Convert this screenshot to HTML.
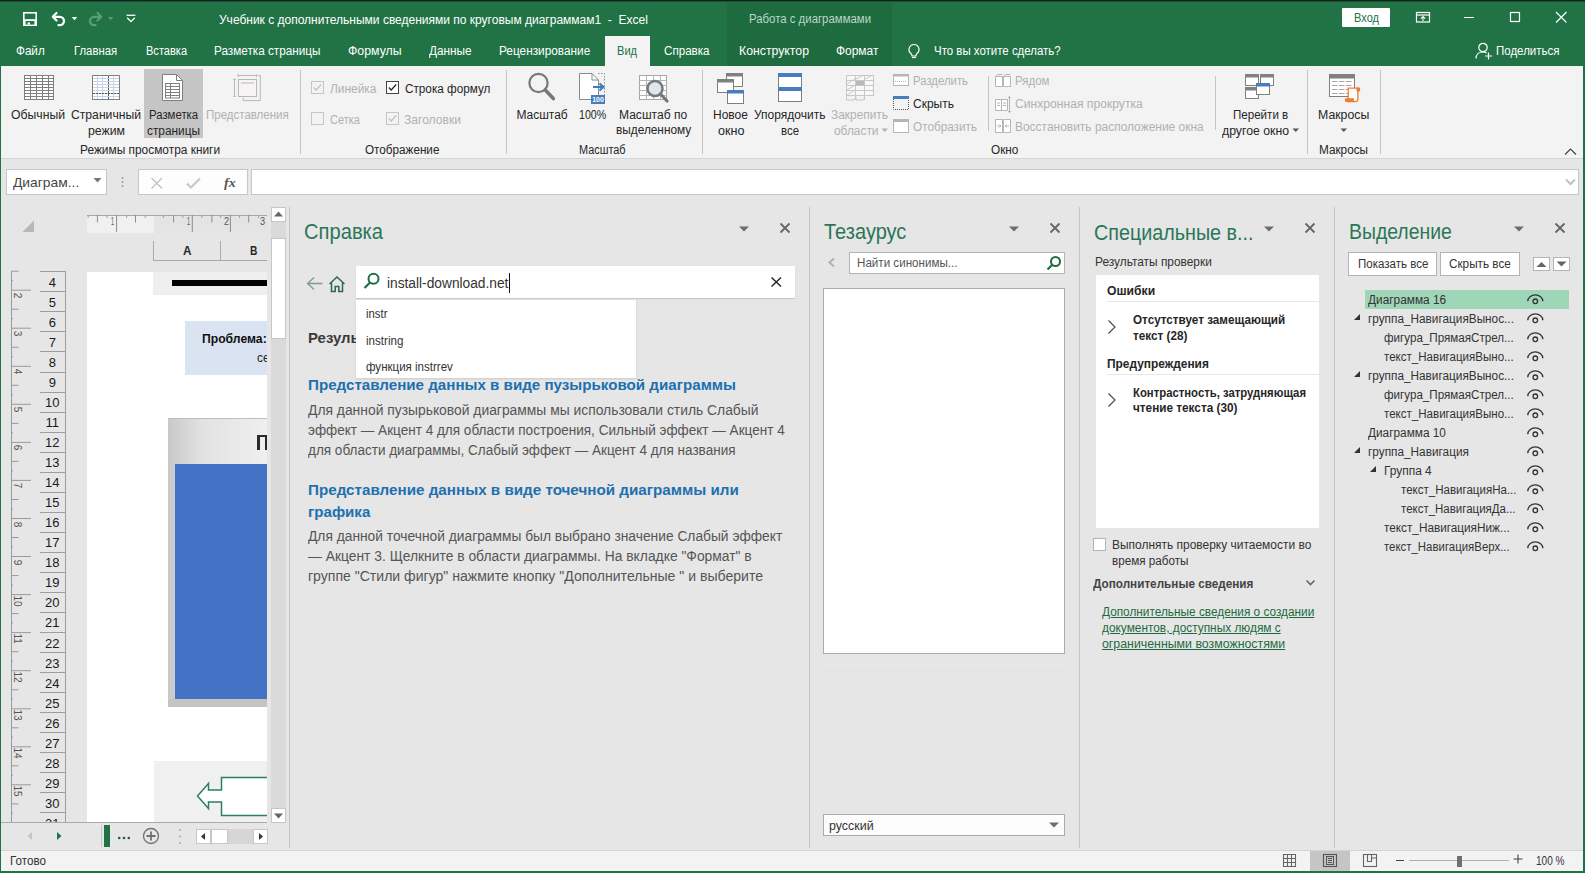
<!DOCTYPE html>
<html><head><meta charset="utf-8"><style>
html,body{margin:0;padding:0;width:1585px;height:873px;overflow:hidden;background:#e6e6e6;}
body{position:relative;font-family:"Liberation Sans",sans-serif;}
.t{position:absolute;white-space:pre;transform-origin:0 0;}
.r{position:absolute;display:block;}
svg{overflow:visible;}
</style></head><body>
<div class="r" style="left:0px;top:0px;width:1585px;height:873px;background:#e6e6e6;"></div>
<div class="r" style="left:0px;top:0px;width:1585px;height:66px;background:#217346;"></div>
<div class="r" style="left:0px;top:0px;width:1585px;height:1px;background:#10231a;"></div>
<div class="r" style="left:0px;top:1px;width:1585px;height:1px;background:#1b4f33;"></div>
<div class="r" style="left:727px;top:3px;width:165px;height:63px;background:#1e6b40;"></div>
<svg class="r" style="left:22px;top:11px;" width="16" height="16" viewBox="0 0 16 16"><rect x="1" y="1" width="14" height="14" fill="#fff"/><rect x="2.6" y="2.6" width="10.8" height="5.6" fill="#217346"/><rect x="3.6" y="10" width="8.8" height="3.6" fill="#217346"/><rect x="5.6" y="11.4" width="2.4" height="2.2" fill="#fff"/></svg>
<svg class="r" style="left:50px;top:10px;" width="30" height="18" viewBox="0 0 30 18"><path d="M6.5 3L2.8 6.8L6.5 10.5" fill="none" stroke="#fff" stroke-width="2.2" stroke-linecap="round" stroke-linejoin="round"/><path d="M3.5 6.8H9.8a4.2 4.2 0 0 1 0 8.4H8.5" fill="none" stroke="#fff" stroke-width="2.2" stroke-linecap="round"/><path d="M21.8 7h5.4l-2.7 3.2z" fill="#fff"/></svg>
<svg class="r" style="left:86px;top:10px;" width="30" height="18" viewBox="0 0 30 18"><path d="M11.5 3L15.2 6.8L11.5 10.5" fill="none" stroke="#5a9e78" stroke-width="2.2" stroke-linecap="round" stroke-linejoin="round"/><path d="M14.5 6.8H8.2a4.2 4.2 0 0 0 0 8.4H9.5" fill="none" stroke="#5a9e78" stroke-width="2.2" stroke-linecap="round"/><path d="M22 7h5.4l-2.7 3.2z" fill="#5a9e78"/></svg>
<svg class="r" style="left:125px;top:12px;" width="12" height="12" viewBox="0 0 12 12"><path d="M1.6 3.3H10.4" stroke="#fff" stroke-width="1.3"/><path d="M2.2 5.8L6 9.6L9.8 5.8" fill="none" stroke="#fff" stroke-width="1.3"/></svg>
<div class="t" style="left:219.00px;top:13.50px;font-size:12px;line-height:12px;color:#ffffff;">Учебник с дополнительными сведениями по круговым диаграммам1  -  Excel</div>
<div class="t" style="left:749.00px;top:12.70px;font-size:12px;line-height:12px;color:#bcd6c6;transform:scaleX(0.9494);">Работа с диаграммами</div>
<div class="r" style="left:1342px;top:8px;width:48px;height:19px;background:#ffffff;border-radius:1px;"></div>
<div class="t" style="left:1354.00px;top:12.00px;font-size:12px;line-height:12px;color:#217346;transform:scaleX(0.9208);">Вход</div>
<svg class="r" style="left:1414px;top:10px;" width="18" height="14" viewBox="0 0 18 14"><rect x="2.5" y="2.5" width="13" height="9.5" fill="none" stroke="#fff" stroke-width="1.2"/><path d="M2.5 5h13" stroke="#fff" stroke-width="1.2"/><path d="M9 11V6.5M6.8 8.7L9 6.5l2.2 2.2" fill="none" stroke="#fff" stroke-width="1.1"/></svg>
<div class="r" style="left:1464px;top:17px;width:10px;height:1px;background:#ffffff;"></div>
<svg class="r" style="left:1508px;top:10px;" width="14" height="14" viewBox="0 0 14 14"><rect x="2.5" y="2.5" width="9" height="9" fill="none" stroke="#fff" stroke-width="1.2"/></svg>
<svg class="r" style="left:1554px;top:10px;" width="14" height="14" viewBox="0 0 14 14"><path d="M2 2l10.5 10.5M12.5 2L2 12.5" stroke="#fff" stroke-width="1.2"/></svg>
<div class="t" style="left:16.00px;top:45.00px;font-size:12px;line-height:12px;color:#ffffff;transform:scaleX(0.9729);">Файл</div>
<div class="t" style="left:74.40px;top:45.00px;font-size:12px;line-height:12px;color:#ffffff;transform:scaleX(0.9453);">Главная</div>
<div class="t" style="left:145.60px;top:45.00px;font-size:12px;line-height:12px;color:#ffffff;transform:scaleX(0.9205);">Вставка</div>
<div class="t" style="left:214.30px;top:45.00px;font-size:12px;line-height:12px;color:#ffffff;transform:scaleX(0.9775);">Разметка страницы</div>
<div class="t" style="left:348.30px;top:45.00px;font-size:12px;line-height:12px;color:#ffffff;transform:scaleX(1.0268);">Формулы</div>
<div class="t" style="left:429.30px;top:45.00px;font-size:12px;line-height:12px;color:#ffffff;transform:scaleX(0.9827);">Данные</div>
<div class="t" style="left:499.00px;top:45.00px;font-size:12px;line-height:12px;color:#ffffff;transform:scaleX(0.9843);">Рецензирование</div>
<div class="t" style="left:664.40px;top:45.00px;font-size:12px;line-height:12px;color:#ffffff;transform:scaleX(0.9682);">Справка</div>
<div class="t" style="left:739.00px;top:45.00px;font-size:12px;line-height:12px;color:#ffffff;transform:scaleX(1.0234);">Конструктор</div>
<div class="t" style="left:836.30px;top:45.00px;font-size:12px;line-height:12px;color:#ffffff;transform:scaleX(0.9941);">Формат</div>
<div class="r" style="left:605px;top:36px;width:45px;height:30px;background:#f3f3f3;"></div>
<div class="t" style="left:617.00px;top:45.00px;font-size:12px;line-height:12px;color:#217346;transform:scaleX(0.9217);">Вид</div>
<svg class="r" style="left:906px;top:42px;" width="16" height="18" viewBox="0 0 16 18"><path d="M8 2.5a5 5 0 0 0-3 9c.8.7 1 1.5 1 2.5h4c0-1 .2-1.8 1-2.5a5 5 0 0 0-3-9z" fill="none" stroke="#fff" stroke-width="1.2"/><path d="M6 15.5h4" stroke="#fff" stroke-width="1.2"/></svg>
<div class="t" style="left:934.20px;top:45.00px;font-size:12px;line-height:12px;color:#ffffff;transform:scaleX(0.9551);">Что вы хотите сделать?</div>
<svg class="r" style="left:1474px;top:41px;" width="20" height="20" viewBox="0 0 20 20"><circle cx="9" cy="6.5" r="4.2" fill="none" stroke="#fff" stroke-width="1.2"/><path d="M2 17.5c0-4 3-6.5 7-6.5 1.5 0 2.7.3 3.7.9" fill="none" stroke="#fff" stroke-width="1.2"/><path d="M14.5 11.5v7M11 15h7" stroke="#fff" stroke-width="1.2"/></svg>
<div class="t" style="left:1495.70px;top:45.00px;font-size:12px;line-height:12px;color:#ffffff;transform:scaleX(0.9585);">Поделиться</div>
<div class="r" style="left:1px;top:66px;width:1582px;height:92px;background:#f3f3f3;"></div>
<div class="r" style="left:1px;top:158px;width:1582px;height:1px;background:#d4d4d4;"></div>
<div class="r" style="left:144px;top:69px;width:59px;height:69px;background:#c5c5c5;"></div>
<div class="r" style="left:300px;top:70px;width:1px;height:84px;background:#c4c4c4;"></div>
<div class="r" style="left:506px;top:70px;width:1px;height:84px;background:#c4c4c4;"></div>
<div class="r" style="left:702px;top:70px;width:1px;height:84px;background:#c4c4c4;"></div>
<div class="r" style="left:1307px;top:70px;width:1px;height:84px;background:#c4c4c4;"></div>
<div class="r" style="left:1380px;top:70px;width:1px;height:84px;background:#c4c4c4;"></div>
<div class="r" style="left:988px;top:76px;width:1px;height:55px;background:#c4c4c4;"></div>
<div class="r" style="left:1215px;top:76px;width:1px;height:54px;background:#c4c4c4;"></div>
<svg class="r" style="left:24px;top:75px;" width="30" height="25" viewBox="0 0 30 25"><rect x="0.5" y="0.5" width="29" height="24" fill="#fff" stroke="#7f7f7f"/><path d="M0 3.5H30" stroke="#7f7f7f" stroke-width="1"/><path d="M0 6.5H30" stroke="#7f7f7f" stroke-width="1"/><path d="M0 9.5H30" stroke="#7f7f7f" stroke-width="1"/><path d="M0 12.5H30" stroke="#7f7f7f" stroke-width="1"/><path d="M0 15.5H30" stroke="#7f7f7f" stroke-width="1"/><path d="M0 18.5H30" stroke="#7f7f7f" stroke-width="1"/><path d="M0 21.5H30" stroke="#7f7f7f" stroke-width="1"/><path d="M6.5 0V25" stroke="#7f7f7f" stroke-width="1"/><path d="M12.5 0V25" stroke="#7f7f7f" stroke-width="1"/><path d="M18.5 0V25" stroke="#7f7f7f" stroke-width="1"/><path d="M24.5 0V25" stroke="#7f7f7f" stroke-width="1"/></svg>
<svg class="r" style="left:92px;top:75px;" width="28" height="25" viewBox="0 0 28 25"><rect x="0.5" y="0.5" width="27" height="24" fill="#fff"/><path d="M0 3.5H28" stroke="#c5d5e8" stroke-width="1"/><path d="M0 6.5H28" stroke="#c5d5e8" stroke-width="1"/><path d="M0 9.5H28" stroke="#c5d5e8" stroke-width="1"/><path d="M0 12.5H28" stroke="#c5d5e8" stroke-width="1"/><path d="M0 15.5H28" stroke="#c5d5e8" stroke-width="1"/><path d="M0 18.5H28" stroke="#c5d5e8" stroke-width="1"/><path d="M0 21.5H28" stroke="#c5d5e8" stroke-width="1"/><path d="M5.5 0V25" stroke="#c5d5e8" stroke-width="1"/><path d="M10.5 0V25" stroke="#c5d5e8" stroke-width="1"/><path d="M21.5 0V25" stroke="#c5d5e8" stroke-width="1"/><path d="M16.5 1V24" stroke="#555" stroke-width="1" stroke-dasharray="2 1"/><path d="M1 18.5H27" stroke="#555" stroke-width="1" stroke-dasharray="2 1"/><rect x="0.5" y="0.5" width="27" height="24" fill="none" stroke="#7f7f7f"/></svg>
<svg class="r" style="left:162px;top:74px;" width="21" height="27" viewBox="0 0 21 27"><path d="M0.5 0.5H14.5L20.5 6.5V26.5H0.5Z" fill="#fff" stroke="#7f7f7f"/><path d="M14.5 0.5V6.5H20.5" fill="none" stroke="#7f7f7f"/><rect x="3.5" y="9.5" width="14" height="14.5" fill="none" stroke="#7f7f7f"/><path d="M3 12.5H18" stroke="#7f7f7f"/><path d="M3 15.5H18" stroke="#7f7f7f"/><path d="M3 18.5H18" stroke="#7f7f7f"/><path d="M3 21.5H18" stroke="#7f7f7f"/><path d="M8.5 9V24" stroke="#7f7f7f"/></svg>
<svg class="r" style="left:233px;top:74px;" width="28" height="27" viewBox="0 0 28 27"><path d="M5 1.5H23.5M5 0V3M23.5 0V3M1.5 5.3V22.3M0 5.3H3M0 22.3H3" fill="none" stroke="#b8b8b8"/><rect x="5.5" y="5.5" width="18" height="17" fill="#f7f4f6" stroke="#b8b8b8"/><path d="M8 9H21" stroke="#d6d6d6" stroke-width="2"/><path d="M25 1.5H27.3V26.6H10.2V24" fill="none" stroke="#b8b8b8"/></svg>
<div class="t" style="left:11.00px;top:109.00px;font-size:12px;line-height:12px;color:#262626;transform:scaleX(1.0179);">Обычный</div>
<div class="t" style="left:71.00px;top:109.00px;font-size:12px;line-height:12px;color:#262626;transform:scaleX(1.0138);">Страничный</div>
<div class="t" style="left:87.50px;top:124.70px;font-size:12px;line-height:12px;color:#262626;transform:scaleX(1.0221);">режим</div>
<div class="t" style="left:148.60px;top:109.00px;font-size:12px;line-height:12px;color:#262626;transform:scaleX(0.9480);">Разметка</div>
<div class="t" style="left:146.70px;top:124.70px;font-size:12px;line-height:12px;color:#262626;transform:scaleX(0.9879);">страницы</div>
<div class="t" style="left:206.00px;top:109.00px;font-size:12px;line-height:12px;color:#b1b1b1;transform:scaleX(0.9577);">Представления</div>
<div class="t" style="left:79.50px;top:143.60px;font-size:12px;line-height:12px;color:#262626;transform:scaleX(0.9915);">Режимы просмотра книги</div>
<svg class="r" style="left:311px;top:81px;" width="13" height="13" viewBox="0 0 13 13"><rect x="0.5" y="0.5" width="12" height="12" fill="#f3f3f3" stroke="#c6c6c6"/><path d="M2.8 6.5L5.2 9L10.2 3.5" fill="none" stroke="#c0c0c0" stroke-width="1.2"/></svg>
<div class="t" style="left:329.50px;top:83.00px;font-size:12px;line-height:12px;color:#b1b1b1;transform:scaleX(0.9936);">Линейка</div>
<svg class="r" style="left:386px;top:81px;" width="13" height="13" viewBox="0 0 13 13"><rect x="0.5" y="0.5" width="12" height="12" fill="#fff" stroke="#444"/><path d="M2.8 6.5L5.2 9L10.2 3.5" fill="none" stroke="#222" stroke-width="1.2"/></svg>
<div class="t" style="left:404.60px;top:83.00px;font-size:12px;line-height:12px;color:#262626;transform:scaleX(0.9771);">Строка формул</div>
<svg class="r" style="left:311px;top:112px;" width="13" height="13" viewBox="0 0 13 13"><rect x="0.5" y="0.5" width="12" height="12" fill="#f3f3f3" stroke="#c6c6c6"/></svg>
<div class="t" style="left:329.60px;top:113.70px;font-size:12px;line-height:12px;color:#b1b1b1;transform:scaleX(0.9158);">Сетка</div>
<svg class="r" style="left:386px;top:112px;" width="13" height="13" viewBox="0 0 13 13"><rect x="0.5" y="0.5" width="12" height="12" fill="#f3f3f3" stroke="#c6c6c6"/><path d="M2.8 6.5L5.2 9L10.2 3.5" fill="none" stroke="#c0c0c0" stroke-width="1.2"/></svg>
<div class="t" style="left:404.00px;top:113.70px;font-size:12px;line-height:12px;color:#b1b1b1;transform:scaleX(1.0071);">Заголовки</div>
<div class="t" style="left:364.60px;top:143.50px;font-size:12px;line-height:12px;color:#262626;transform:scaleX(0.9751);">Отображение</div>
<svg class="r" style="left:526px;top:70px;" width="34" height="34" viewBox="0 0 34 34"><circle cx="12.5" cy="13" r="9.1" fill="none" stroke="#787878" stroke-width="2.2"/><path d="M19.3 20L27.3 28.6" stroke="#787878" stroke-width="3.6" stroke-linecap="round"/></svg>
<svg class="r" style="left:579px;top:73px;" width="27" height="31" viewBox="0 0 27 31"><path d="M0.5 0.5H13L19.5 7V26.5H0.5Z" fill="#fff" stroke="#8a8a8a"/><path d="M13 0.5V7H19.5" fill="none" stroke="#8a8a8a"/><path d="M19 0.5H25.5V22" fill="none" stroke="#8a8a8a" stroke-dasharray="1.5 1.5"/><path d="M14 14H24M20.5 10.5L24.5 14L20.5 17.5" fill="none" stroke="#3d7bbf" stroke-width="2"/><rect x="12" y="22" width="14" height="9" fill="#4a7ebb"/><text x="19" y="29.3" font-family="Liberation Sans" font-size="7" font-weight="bold" fill="#fff" text-anchor="middle">100</text></svg>
<svg class="r" style="left:639px;top:75px;" width="30" height="28" viewBox="0 0 30 28"><rect x="0.5" y="0.5" width="27" height="24" fill="#fff" stroke="#a6a6a6"/><path d="M0 5.5H28" stroke="#b5b5b5"/><path d="M0 10.5H28" stroke="#b5b5b5"/><path d="M0 15.5H28" stroke="#b5b5b5"/><path d="M0 20.5H28" stroke="#b5b5b5"/><path d="M7.5 0V25" stroke="#b5b5b5"/><path d="M14.5 0V25" stroke="#b5b5b5"/><path d="M21.5 0V25" stroke="#b5b5b5"/><circle cx="16" cy="13.5" r="7.5" fill="#dfe6ee" stroke="#787878" stroke-width="2.5"/><path d="M21.5 19L28 26" stroke="#787878" stroke-width="3.2" stroke-linecap="round"/></svg>
<div class="t" style="left:516.40px;top:108.90px;font-size:12px;line-height:12px;color:#262626;">Масштаб</div>
<div class="t" style="left:578.80px;top:108.90px;font-size:12px;line-height:12px;color:#262626;transform:scaleX(0.8860);">100%</div>
<div class="t" style="left:619.20px;top:108.90px;font-size:12px;line-height:12px;color:#262626;transform:scaleX(1.0037);">Масштаб по</div>
<div class="t" style="left:615.80px;top:124.40px;font-size:12px;line-height:12px;color:#262626;transform:scaleX(0.9862);">выделенному</div>
<div class="t" style="left:579.40px;top:143.60px;font-size:12px;line-height:12px;color:#262626;transform:scaleX(0.9075);">Масштаб</div>
<svg class="r" style="left:717px;top:73px;" width="27" height="31" viewBox="0 0 27 31"><rect x="9.5" y="0.5" width="16" height="13" fill="#fff" stroke="#808080"/><rect x="9" y="0" width="17" height="3.5" fill="#808080"/><rect x="0.5" y="6.5" width="16" height="13" fill="#fff" stroke="#808080"/><rect x="0" y="6" width="17" height="3.5" fill="#808080"/><rect x="10.5" y="17.5" width="16" height="13" fill="#fff" stroke="#808080"/><rect x="10" y="17" width="17" height="3.5" fill="#4a7ebb"/></svg>
<svg class="r" style="left:778px;top:73px;" width="24" height="29" viewBox="0 0 24 29"><rect x="0.5" y="0.5" width="23" height="28" fill="#fff" stroke="#808080"/><rect x="0" y="0" width="24" height="4" fill="#4a7ebb"/><rect x="0" y="14" width="24" height="4" fill="#4a7ebb"/></svg>
<svg class="r" style="left:846px;top:75px;" width="28" height="26" viewBox="0 0 28 26"><rect x="0.5" y="0.5" width="27" height="20" fill="#f8f8f8" stroke="#c8c8c8"/><path d="M0 5.5H28" stroke="#c8c8c8"/><path d="M0 10.5H28" stroke="#c8c8c8"/><path d="M0 15.5H28" stroke="#c8c8c8"/><path d="M9.5 0V25" stroke="#c8c8c8"/><path d="M18.5 0V25" stroke="#c8c8c8"/><path d="M1 9L9 4M1 15L9 10M1 20L9 15M10 4L18 0M19 4L27 0" stroke="#c8c8c8"/><rect x="10" y="6" width="8" height="4" fill="#b8b8b8"/><path d="M0.5 21V25H8L10 22V25H17L19 22" fill="none" stroke="#c8c8c8"/></svg>
<div class="t" style="left:713.00px;top:109.00px;font-size:12px;line-height:12px;color:#262626;">Новое</div>
<div class="t" style="left:717.50px;top:124.70px;font-size:12px;line-height:12px;color:#262626;transform:scaleX(1.0495);">окно</div>
<div class="t" style="left:754.00px;top:109.00px;font-size:12px;line-height:12px;color:#262626;">Упорядочить</div>
<div class="t" style="left:781.00px;top:124.70px;font-size:12px;line-height:12px;color:#262626;transform:scaleX(0.9524);">все</div>
<div class="t" style="left:831.00px;top:109.00px;font-size:12px;line-height:12px;color:#b1b1b1;transform:scaleX(0.9922);">Закрепить</div>
<div class="t" style="left:833.50px;top:124.70px;font-size:12px;line-height:12px;color:#b1b1b1;transform:scaleX(0.9911);">области</div>
<svg class="r" style="left:881px;top:128px;" width="8" height="5" viewBox="0 0 8 5"><path d="M0.5 0.5H7L3.75 4z" fill="#b1b1b1"/></svg>
<svg class="r" style="left:893px;top:74px;" width="17" height="13" viewBox="0 0 17 13"><rect x="0.5" y="0.5" width="15" height="11" fill="#fff" stroke="#b6b6b6"/><rect x="0" y="0" width="16" height="2.5" fill="#b6b6b6"/><path d="M2 7.5H14" stroke="#b6b6b6" stroke-dasharray="1 1"/></svg>
<svg class="r" style="left:893px;top:96px;" width="17" height="14" viewBox="0 0 17 14"><rect x="0" y="0" width="16" height="3" fill="#4a7ebb"/><path d="M0.5 3V13.5H15.5V3" fill="none" stroke="#555" stroke-dasharray="1 1"/></svg>
<svg class="r" style="left:893px;top:119px;" width="17" height="14" viewBox="0 0 17 14"><rect x="0.5" y="0.5" width="15" height="13" fill="#fff" stroke="#b6b6b6"/><rect x="0" y="0" width="16" height="3" fill="#b6b6b6"/></svg>
<div class="t" style="left:913.00px;top:75.20px;font-size:12px;line-height:12px;color:#b1b1b1;transform:scaleX(0.9466);">Разделить</div>
<div class="t" style="left:913.00px;top:98.20px;font-size:12px;line-height:12px;color:#262626;">Скрыть</div>
<div class="t" style="left:913.00px;top:121.00px;font-size:12px;line-height:12px;color:#b1b1b1;transform:scaleX(0.9786);">Отобразить</div>
<svg class="r" style="left:995px;top:74px;" width="17" height="13" viewBox="0 0 17 13"><path d="M0.5 2.5H7.5V12.5H0.5ZM8.5 2.5H15.5V12.5H8.5Z" fill="#fff" stroke="#b6b6b6"/><path d="M0.5 2.5L2.5 0.5H7.5M8.5 2.5L10.5 0.5H15.5" fill="none" stroke="#b6b6b6"/></svg>
<svg class="r" style="left:995px;top:96px;" width="17" height="17" viewBox="0 0 17 17"><path d="M0.5 3.5H6.5V14.5H0.5ZM6.5 3.5H12.5V14.5H6.5Z" fill="#fff" stroke="#b6b6b6"/><path d="M2 7H5M2 9.5H5M8 7H11M8 9.5H11" stroke="#b6b6b6"/><path d="M14.5 0V17M13 2L14.5 0.5L16 2M13 15L14.5 16.5L16 15" fill="none" stroke="#b6b6b6"/></svg>
<svg class="r" style="left:995px;top:119px;" width="17" height="14" viewBox="0 0 17 14"><path d="M0.5 0.5H7.5V13.5H0.5ZM8.5 0.5H15.5V13.5H8.5Z" fill="#fff" stroke="#b6b6b6"/><path d="M2 7H6M4.5 5.5L6 7L4.5 8.5M14 7H10M11.5 5.5L10 7L11.5 8.5" fill="none" stroke="#b6b6b6"/></svg>
<div class="t" style="left:1015.00px;top:75.20px;font-size:12px;line-height:12px;color:#b1b1b1;transform:scaleX(0.9570);">Рядом</div>
<div class="t" style="left:1015.00px;top:98.20px;font-size:12px;line-height:12px;color:#b1b1b1;transform:scaleX(1.0107);">Синхронная прокрутка</div>
<div class="t" style="left:1015.00px;top:121.00px;font-size:12px;line-height:12px;color:#b1b1b1;transform:scaleX(0.9963);">Восстановить расположение окна</div>
<div class="t" style="left:990.60px;top:143.50px;font-size:12px;line-height:12px;color:#262626;transform:scaleX(0.9821);">Окно</div>
<svg class="r" style="left:1245px;top:74px;" width="29" height="25" viewBox="0 0 29 25"><rect x="0.5" y="0.5" width="13" height="11" fill="#fff" stroke="#808080"/><rect x="0" y="0" width="14" height="3.5" fill="#808080"/><rect x="15.5" y="0.5" width="13" height="11" fill="#fff" stroke="#808080"/><rect x="15" y="0" width="14" height="3.5" fill="#808080"/><rect x="0.5" y="13.5" width="13" height="11" fill="#fff" stroke="#808080"/><rect x="0" y="13" width="14" height="3.5" fill="#808080"/><rect x="11.5" y="9.5" width="13" height="11" fill="#fff" stroke="#808080"/><rect x="11" y="9" width="14" height="3.5" fill="#4a7ebb"/></svg>
<div class="t" style="left:1232.50px;top:109.00px;font-size:12px;line-height:12px;color:#262626;transform:scaleX(0.9642);">Перейти в</div>
<div class="t" style="left:1222.00px;top:124.70px;font-size:12px;line-height:12px;color:#262626;transform:scaleX(1.0221);">другое окно</div>
<svg class="r" style="left:1292px;top:128px;" width="8" height="5" viewBox="0 0 8 5"><path d="M0.5 0.5H7L3.75 4z" fill="#555"/></svg>
<svg class="r" style="left:1329px;top:74px;" width="32" height="29" viewBox="0 0 32 29"><rect x="0.5" y="0.5" width="25" height="22" fill="#fff" stroke="#808080"/><rect x="0" y="0" width="26" height="4.5" fill="#808080"/><path d="M3 7.5 H8.5 M10 7.5 H15.5 M17 7.5 H22.5" stroke="#a6a6a6" stroke-width="1.1"/><path d="M3 11.5 H8.5 M10 11.5 H15.5 M17 11.5 H22.5" stroke="#a6a6a6" stroke-width="1.1"/><path d="M3 15.5 H8.5 M10 15.5 H15.5 M17 15.5 H22.5" stroke="#a6a6a6" stroke-width="1.1"/><path d="M3 19.5 H8.5 M10 19.5 H15.5 M17 19.5 H22.5" stroke="#a6a6a6" stroke-width="1.1"/><path d="M19.2 14.2H28.8V25.2Q28.8 27.6 26.4 27.6H19.2Z" fill="#fff" stroke="#ed7d31" stroke-width="1.3"/><rect x="27.5" y="13.5" width="3.6" height="4" rx="1" fill="#ed7d31"/><rect x="16" y="24.2" width="9" height="3.8" rx="1" fill="#ed7d31"/></svg>
<div class="t" style="left:1318.40px;top:109.00px;font-size:12px;line-height:12px;color:#262626;transform:scaleX(1.0250);">Макросы</div>
<svg class="r" style="left:1340px;top:128px;" width="8" height="5" viewBox="0 0 8 5"><path d="M0.5 0.5H7L3.75 4z" fill="#555"/></svg>
<div class="t" style="left:1319.00px;top:143.60px;font-size:12px;line-height:12px;color:#262626;transform:scaleX(0.9790);">Макросы</div>
<svg class="r" style="left:1564px;top:147px;" width="14" height="9" viewBox="0 0 14 9"><path d="M1 7.5L6.5 2L12 7.5" fill="none" stroke="#444" stroke-width="1.2"/></svg>
<div class="r" style="left:1px;top:159px;width:1582px;height:46px;background:#e6e6e6;"></div>
<div class="r" style="left:6px;top:169px;width:101px;height:26px;background:#ffffff;box-shadow:inset 0 0 0 1px #c6c6c6;"></div>
<div class="t" style="left:13.10px;top:176.00px;font-size:13px;line-height:13px;color:#444;transform:scaleX(1.0635);">Диаграм...</div>
<svg class="r" style="left:93px;top:177px;" width="10" height="7" viewBox="0 0 10 7"><path d="M0.5 1H8.5L4.5 5.5z" fill="#777"/></svg>
<svg class="r" style="left:120px;top:176px;" width="5" height="12" viewBox="0 0 5 12"><circle cx="2.5" cy="2" r="1" fill="#999"/><circle cx="2.5" cy="6" r="1" fill="#999"/><circle cx="2.5" cy="10" r="1" fill="#999"/></svg>
<div class="r" style="left:138px;top:169px;width:110px;height:26px;background:#fdfdfd;box-shadow:inset 0 0 0 1px #c6c6c6;"></div>
<svg class="r" style="left:149px;top:176px;" width="16" height="14" viewBox="0 0 16 14"><path d="M2.5 2L13 12.5M13 2L2.5 12.5" stroke="#c2c2c2" stroke-width="1.4"/></svg>
<svg class="r" style="left:185px;top:176px;" width="17" height="14" viewBox="0 0 17 14"><path d="M2 7.5L6 11.5L15 2.5" fill="none" stroke="#c8c8c8" stroke-width="2.2"/></svg>
<div class="t" style="left:224.00px;top:176.20px;font-size:13px;line-height:13px;color:#555;transform:scaleX(1.0891);font-family:'Liberation Serif',serif;font-style:italic;font-weight:bold;">fx</div>
<div class="r" style="left:251px;top:169px;width:1328px;height:26px;background:#ffffff;box-shadow:inset 0 0 0 1px #c6c6c6;"></div>
<svg class="r" style="left:1565px;top:178px;" width="11" height="8" viewBox="0 0 11 8"><path d="M1 1.5L5.5 6L10 1.5" fill="none" stroke="#c0c0c0" stroke-width="2"/></svg>
<div class="r" style="left:1px;top:205px;width:289px;height:645px;background:#e6e6e6;"></div>
<svg class="r" style="left:22px;top:220px;" width="13" height="13" viewBox="0 0 13 13"><path d="M12 0.5V12H0.5z" fill="#b8b8b8"/></svg>
<div class="r" style="left:87px;top:215px;width:67px;height:18px;background:#f0f0f0;"></div>
<div class="r" style="left:154px;top:215px;width:113px;height:18px;background:#e4e4e4;"></div>
<div class="r" style="left:87px;top:215px;width:180px;height:1px;background:#a8a8a8;"></div>
<svg class="r" style="left:87px;top:215px;" width="180" height="18" viewBox="0 0 180 18"><path d="M29.6 0V17" stroke="#8c8c8c"/><path d="M105.3 0V17" stroke="#8c8c8c"/><path d="M143.4 0V17" stroke="#8c8c8c"/><path d="M10.4 0V7.5" stroke="#8c8c8c"/><path d="M48.5 0V7.5" stroke="#8c8c8c"/><path d="M86.6 0V7.5" stroke="#8c8c8c"/><path d="M124.9 0V7.5" stroke="#8c8c8c"/><path d="M161.7 0V7.5" stroke="#8c8c8c"/><path d="M1.2 0V3" stroke="#a0a0a0"/><path d="M20.0 0V3" stroke="#a0a0a0"/><path d="M39.7 0V3" stroke="#a0a0a0"/><path d="M58.2 0V3" stroke="#a0a0a0"/><path d="M76.3 0V3" stroke="#a0a0a0"/><path d="M95.8 0V3" stroke="#a0a0a0"/><path d="M114.8 0V3" stroke="#a0a0a0"/><path d="M133.7 0V3" stroke="#a0a0a0"/><path d="M152.6 0V3" stroke="#a0a0a0"/><path d="M171.5 0V3" stroke="#a0a0a0"/></svg>
<div class="t" style="left:111.00px;top:216.50px;font-size:10px;line-height:10px;color:#555;transform:scaleX(0.5405);">1</div>
<div class="t" style="left:187.30px;top:216.50px;font-size:10px;line-height:10px;color:#555;transform:scaleX(0.5586);">1</div>
<div class="t" style="left:223.90px;top:216.50px;font-size:10px;line-height:10px;color:#555;transform:scaleX(0.9009);">2</div>
<div class="t" style="left:260.40px;top:216.50px;font-size:10px;line-height:10px;color:#555;transform:scaleX(0.9189);">3</div>
<div class="r" style="left:153px;top:241px;width:114px;height:20px;background:#e6e6e6;"></div>
<div class="r" style="left:153px;top:260px;width:114px;height:1px;background:#ababab;"></div>
<div class="r" style="left:153px;top:241px;width:1px;height:20px;background:#ababab;"></div>
<div class="r" style="left:220px;top:241px;width:1px;height:20px;background:#ababab;"></div>
<div class="t" style="left:183.20px;top:245.45px;font-size:12.5px;line-height:12.5px;color:#262626;font-weight:bold;transform:scaleX(0.9392);">A</div>
<div class="t" style="left:250.30px;top:245.45px;font-size:12.5px;line-height:12.5px;color:#262626;font-weight:bold;transform:scaleX(0.8177);">B</div>
<div class="r" style="left:11px;top:271px;width:1px;height:551px;background:#9a9a9a;"></div>
<svg class="r" style="left:11px;top:271px;" width="22" height="551" viewBox="0 0 22 551"><path d="M0 19.2H20" stroke="#9a9a9a"/><path d="M0 0.2H7.5" stroke="#9a9a9a"/><path d="M0 9.6H2" stroke="#9a9a9a"/><path d="M0 57.2H20" stroke="#9a9a9a"/><path d="M0 38.2H7.5" stroke="#9a9a9a"/><path d="M0 47.6H2" stroke="#9a9a9a"/><path d="M0 95.3H20" stroke="#9a9a9a"/><path d="M0 76.3H7.5" stroke="#9a9a9a"/><path d="M0 85.7H2" stroke="#9a9a9a"/><path d="M0 133.3H20" stroke="#9a9a9a"/><path d="M0 114.3H7.5" stroke="#9a9a9a"/><path d="M0 123.7H2" stroke="#9a9a9a"/><path d="M0 171.4H20" stroke="#9a9a9a"/><path d="M0 152.4H7.5" stroke="#9a9a9a"/><path d="M0 161.8H2" stroke="#9a9a9a"/><path d="M0 209.4H20" stroke="#9a9a9a"/><path d="M0 190.4H7.5" stroke="#9a9a9a"/><path d="M0 199.8H2" stroke="#9a9a9a"/><path d="M0 247.5H20" stroke="#9a9a9a"/><path d="M0 228.5H7.5" stroke="#9a9a9a"/><path d="M0 237.9H2" stroke="#9a9a9a"/><path d="M0 285.5H20" stroke="#9a9a9a"/><path d="M0 266.5H7.5" stroke="#9a9a9a"/><path d="M0 275.9H2" stroke="#9a9a9a"/><path d="M0 323.6H20" stroke="#9a9a9a"/><path d="M0 304.6H7.5" stroke="#9a9a9a"/><path d="M0 314.0H2" stroke="#9a9a9a"/><path d="M0 361.6H20" stroke="#9a9a9a"/><path d="M0 342.6H7.5" stroke="#9a9a9a"/><path d="M0 352.0H2" stroke="#9a9a9a"/><path d="M0 399.7H20" stroke="#9a9a9a"/><path d="M0 380.7H7.5" stroke="#9a9a9a"/><path d="M0 390.1H2" stroke="#9a9a9a"/><path d="M0 437.8H20" stroke="#9a9a9a"/><path d="M0 418.8H7.5" stroke="#9a9a9a"/><path d="M0 428.1H2" stroke="#9a9a9a"/><path d="M0 475.8H20" stroke="#9a9a9a"/><path d="M0 456.8H7.5" stroke="#9a9a9a"/><path d="M0 466.2H2" stroke="#9a9a9a"/><path d="M0 513.8H20" stroke="#9a9a9a"/><path d="M0 494.8H7.5" stroke="#9a9a9a"/><path d="M0 504.2H2" stroke="#9a9a9a"/><path d="M0 532.9H7.5" stroke="#9a9a9a"/><path d="M0 542.3H2" stroke="#9a9a9a"/></svg>
<div class="t" style="left:11.5px;top:291.2px;width:10px;height:9px;font-size:10px;line-height:9px;color:#555;transform:rotate(90deg);transform-origin:50% 50%;text-align:center">2</div>
<div class="t" style="left:11.5px;top:329.2px;width:10px;height:9px;font-size:10px;line-height:9px;color:#555;transform:rotate(90deg);transform-origin:50% 50%;text-align:center">3</div>
<div class="t" style="left:11.5px;top:367.3px;width:10px;height:9px;font-size:10px;line-height:9px;color:#555;transform:rotate(90deg);transform-origin:50% 50%;text-align:center">4</div>
<div class="t" style="left:11.5px;top:405.3px;width:10px;height:9px;font-size:10px;line-height:9px;color:#555;transform:rotate(90deg);transform-origin:50% 50%;text-align:center">5</div>
<div class="t" style="left:11.5px;top:443.4px;width:10px;height:9px;font-size:10px;line-height:9px;color:#555;transform:rotate(90deg);transform-origin:50% 50%;text-align:center">6</div>
<div class="t" style="left:11.5px;top:481.4px;width:10px;height:9px;font-size:10px;line-height:9px;color:#555;transform:rotate(90deg);transform-origin:50% 50%;text-align:center">7</div>
<div class="t" style="left:11.5px;top:519.5px;width:10px;height:9px;font-size:10px;line-height:9px;color:#555;transform:rotate(90deg);transform-origin:50% 50%;text-align:center">8</div>
<div class="t" style="left:11.5px;top:557.5px;width:10px;height:9px;font-size:10px;line-height:9px;color:#555;transform:rotate(90deg);transform-origin:50% 50%;text-align:center">9</div>
<div class="t" style="left:11.5px;top:595.6px;width:10px;height:9px;font-size:10px;line-height:9px;color:#555;transform:rotate(90deg);transform-origin:50% 50%;text-align:center">10</div>
<div class="t" style="left:11.5px;top:633.6px;width:10px;height:9px;font-size:10px;line-height:9px;color:#555;transform:rotate(90deg);transform-origin:50% 50%;text-align:center">11</div>
<div class="t" style="left:11.5px;top:671.7px;width:10px;height:9px;font-size:10px;line-height:9px;color:#555;transform:rotate(90deg);transform-origin:50% 50%;text-align:center">12</div>
<div class="t" style="left:11.5px;top:709.8px;width:10px;height:9px;font-size:10px;line-height:9px;color:#555;transform:rotate(90deg);transform-origin:50% 50%;text-align:center">13</div>
<div class="t" style="left:11.5px;top:747.8px;width:10px;height:9px;font-size:10px;line-height:9px;color:#555;transform:rotate(90deg);transform-origin:50% 50%;text-align:center">14</div>
<div class="t" style="left:11.5px;top:785.8px;width:10px;height:9px;font-size:10px;line-height:9px;color:#555;transform:rotate(90deg);transform-origin:50% 50%;text-align:center">15</div>
<div class="r" style="left:40px;top:271px;width:26px;height:551px;background:#e6e6e6;"></div>
<div class="r" style="left:65px;top:271px;width:1px;height:551px;background:#9d9d9d;"></div>
<div class="r" style="left:40px;top:271px;width:26px;height:1px;background:#9d9d9d;"></div>
<div class="t" style="left:37.3px;top:276.1px;width:30px;text-align:center;font-size:13px;line-height:13px;color:#1a1a1a">4</div>
<div class="r" style="left:40px;top:291px;width:26px;height:1px;background:#9d9d9d;"></div>
<div class="t" style="left:37.3px;top:296.1px;width:30px;text-align:center;font-size:13px;line-height:13px;color:#1a1a1a">5</div>
<div class="r" style="left:40px;top:311px;width:26px;height:1px;background:#9d9d9d;"></div>
<div class="t" style="left:37.3px;top:316.1px;width:30px;text-align:center;font-size:13px;line-height:13px;color:#1a1a1a">6</div>
<div class="r" style="left:40px;top:331px;width:26px;height:1px;background:#9d9d9d;"></div>
<div class="t" style="left:37.3px;top:336.2px;width:30px;text-align:center;font-size:13px;line-height:13px;color:#1a1a1a">7</div>
<div class="r" style="left:40px;top:351px;width:26px;height:1px;background:#9d9d9d;"></div>
<div class="t" style="left:37.3px;top:356.2px;width:30px;text-align:center;font-size:13px;line-height:13px;color:#1a1a1a">8</div>
<div class="r" style="left:40px;top:372px;width:26px;height:1px;background:#9d9d9d;"></div>
<div class="t" style="left:37.3px;top:376.2px;width:30px;text-align:center;font-size:13px;line-height:13px;color:#1a1a1a">9</div>
<div class="r" style="left:40px;top:392px;width:26px;height:1px;background:#9d9d9d;"></div>
<div class="t" style="left:37.3px;top:396.2px;width:30px;text-align:center;font-size:13px;line-height:13px;color:#1a1a1a">10</div>
<div class="r" style="left:40px;top:412px;width:26px;height:1px;background:#9d9d9d;"></div>
<div class="t" style="left:37.3px;top:416.2px;width:30px;text-align:center;font-size:13px;line-height:13px;color:#1a1a1a">11</div>
<div class="r" style="left:40px;top:432px;width:26px;height:1px;background:#9d9d9d;"></div>
<div class="t" style="left:37.3px;top:436.3px;width:30px;text-align:center;font-size:13px;line-height:13px;color:#1a1a1a">12</div>
<div class="r" style="left:40px;top:452px;width:26px;height:1px;background:#9d9d9d;"></div>
<div class="t" style="left:37.3px;top:456.3px;width:30px;text-align:center;font-size:13px;line-height:13px;color:#1a1a1a">13</div>
<div class="r" style="left:40px;top:472px;width:26px;height:1px;background:#9d9d9d;"></div>
<div class="t" style="left:37.3px;top:476.3px;width:30px;text-align:center;font-size:13px;line-height:13px;color:#1a1a1a">14</div>
<div class="r" style="left:40px;top:492px;width:26px;height:1px;background:#9d9d9d;"></div>
<div class="t" style="left:37.3px;top:496.3px;width:30px;text-align:center;font-size:13px;line-height:13px;color:#1a1a1a">15</div>
<div class="r" style="left:40px;top:512px;width:26px;height:1px;background:#9d9d9d;"></div>
<div class="t" style="left:37.3px;top:516.3px;width:30px;text-align:center;font-size:13px;line-height:13px;color:#1a1a1a">16</div>
<div class="r" style="left:40px;top:532px;width:26px;height:1px;background:#9d9d9d;"></div>
<div class="t" style="left:37.3px;top:536.4px;width:30px;text-align:center;font-size:13px;line-height:13px;color:#1a1a1a">17</div>
<div class="r" style="left:40px;top:552px;width:26px;height:1px;background:#9d9d9d;"></div>
<div class="t" style="left:37.3px;top:556.4px;width:30px;text-align:center;font-size:13px;line-height:13px;color:#1a1a1a">18</div>
<div class="r" style="left:40px;top:572px;width:26px;height:1px;background:#9d9d9d;"></div>
<div class="t" style="left:37.3px;top:576.4px;width:30px;text-align:center;font-size:13px;line-height:13px;color:#1a1a1a">19</div>
<div class="r" style="left:40px;top:592px;width:26px;height:1px;background:#9d9d9d;"></div>
<div class="t" style="left:37.3px;top:596.4px;width:30px;text-align:center;font-size:13px;line-height:13px;color:#1a1a1a">20</div>
<div class="r" style="left:40px;top:612px;width:26px;height:1px;background:#9d9d9d;"></div>
<div class="t" style="left:37.3px;top:616.4px;width:30px;text-align:center;font-size:13px;line-height:13px;color:#1a1a1a">21</div>
<div class="r" style="left:40px;top:632px;width:26px;height:1px;background:#9d9d9d;"></div>
<div class="t" style="left:37.3px;top:636.5px;width:30px;text-align:center;font-size:13px;line-height:13px;color:#1a1a1a">22</div>
<div class="r" style="left:40px;top:652px;width:26px;height:1px;background:#9d9d9d;"></div>
<div class="t" style="left:37.3px;top:656.5px;width:30px;text-align:center;font-size:13px;line-height:13px;color:#1a1a1a">23</div>
<div class="r" style="left:40px;top:672px;width:26px;height:1px;background:#9d9d9d;"></div>
<div class="t" style="left:37.3px;top:676.5px;width:30px;text-align:center;font-size:13px;line-height:13px;color:#1a1a1a">24</div>
<div class="r" style="left:40px;top:692px;width:26px;height:1px;background:#9d9d9d;"></div>
<div class="t" style="left:37.3px;top:696.5px;width:30px;text-align:center;font-size:13px;line-height:13px;color:#1a1a1a">25</div>
<div class="r" style="left:40px;top:712px;width:26px;height:1px;background:#9d9d9d;"></div>
<div class="t" style="left:37.3px;top:716.5px;width:30px;text-align:center;font-size:13px;line-height:13px;color:#1a1a1a">26</div>
<div class="r" style="left:40px;top:732px;width:26px;height:1px;background:#9d9d9d;"></div>
<div class="t" style="left:37.3px;top:736.6px;width:30px;text-align:center;font-size:13px;line-height:13px;color:#1a1a1a">27</div>
<div class="r" style="left:40px;top:752px;width:26px;height:1px;background:#9d9d9d;"></div>
<div class="t" style="left:37.3px;top:756.6px;width:30px;text-align:center;font-size:13px;line-height:13px;color:#1a1a1a">28</div>
<div class="r" style="left:40px;top:772px;width:26px;height:1px;background:#9d9d9d;"></div>
<div class="t" style="left:37.3px;top:776.6px;width:30px;text-align:center;font-size:13px;line-height:13px;color:#1a1a1a">29</div>
<div class="r" style="left:40px;top:792px;width:26px;height:1px;background:#9d9d9d;"></div>
<div class="t" style="left:37.3px;top:796.6px;width:30px;text-align:center;font-size:13px;line-height:13px;color:#1a1a1a">30</div>
<div class="r" style="left:40px;top:812px;width:26px;height:1px;background:#9d9d9d;"></div>
<div class="t" style="left:37.3px;top:816.6px;width:30px;text-align:center;font-size:13px;line-height:13px;color:#1a1a1a">31</div>
<div class="r" style="left:87px;top:272px;width:180px;height:550px;background:#ffffff;"></div>
<div class="r" style="left:153px;top:272px;width:114px;height:23px;background:#efefef;"></div>
<div class="r" style="left:172px;top:280px;width:95px;height:6px;background:#000000;"></div>
<div class="r" style="left:185px;top:321px;width:82px;height:54px;background:#dae3f2;"></div>
<div class="t" style="left:202.30px;top:332.00px;font-size:13px;line-height:13px;color:#111;font-weight:bold;transform:scaleX(0.9363);">Проблема:</div>
<div class="t" style="left:257.00px;top:352.00px;font-size:12px;line-height:12px;color:#222;">се</div>
<div class="r" style="left:168px;top:418px;width:99px;height:289px;background:linear-gradient(90deg,#c9c9c9 0%,#e2e2e2 35%,#efefef 100%);"></div>
<div class="r" style="left:168px;top:699px;width:99px;height:8px;background:#c4c4c4;"></div>
<div class="r" style="left:257px;top:435px;width:3px;height:15px;background:#2a2a2a;"></div>
<div class="r" style="left:257px;top:435px;width:10px;height:2px;background:#2a2a2a;"></div>
<div class="r" style="left:265px;top:435px;width:2px;height:15px;background:#2a2a2a;"></div>
<div class="r" style="left:168px;top:418px;width:99px;height:1px;background:#bdbdbd;"></div>
<div class="r" style="left:175px;top:464px;width:92px;height:235px;background:#4472c4;"></div>
<div class="r" style="left:154px;top:761px;width:113px;height:61px;background:#f0f0f0;"></div>
<svg class="r" style="left:196px;top:776px;" width="71" height="41" viewBox="0 0 71 41"><path d="M71 1.5H25.5V14H12.5V7.5L1.5 20L12.5 32.5V26H25.5V39.5H71" fill="#fff" stroke="#2b8060" stroke-width="1.5"/></svg>
<div class="r" style="left:267px;top:205px;width:4px;height:617px;background:#e6e6e6;"></div>
<div class="r" style="left:271px;top:221px;width:15px;height:587px;background:#dadada;"></div>
<div class="r" style="left:271px;top:207px;width:15px;height:15px;background:#ffffff;box-shadow:inset 0 0 0 1px #c6c6c6;"></div>
<svg class="r" style="left:273px;top:210px;" width="11" height="8" viewBox="0 0 11 8"><path d="M1 6.5H10L5.5 1.5z" fill="#666"/></svg>
<div class="r" style="left:271px;top:238px;width:15px;height:101px;background:#ffffff;box-shadow:inset 0 0 0 1px #c6c6c6;"></div>
<div class="r" style="left:271px;top:808px;width:15px;height:15px;background:#ffffff;box-shadow:inset 0 0 0 1px #c6c6c6;"></div>
<svg class="r" style="left:273px;top:812px;" width="11" height="8" viewBox="0 0 11 8"><path d="M1 1.5H10L5.5 6.5z" fill="#666"/></svg>
<div class="r" style="left:289px;top:207px;width:1px;height:641px;background:#c6c6c6;"></div>
<div class="r" style="left:1px;top:822px;width:266px;height:1px;background:#ababab;"></div>
<div class="r" style="left:1px;top:823px;width:288px;height:27px;background:#e6e6e6;"></div>
<svg class="r" style="left:26px;top:831px;" width="8" height="10" viewBox="0 0 8 10"><path d="M6 1L1.5 5L6 9z" fill="#c4c4c4"/></svg>
<svg class="r" style="left:55px;top:831px;" width="8" height="10" viewBox="0 0 8 10"><path d="M2 1L6.5 5L2 9z" fill="#217346"/></svg>
<div class="r" style="left:101px;top:825px;width:1px;height:22px;background:#c6c6c6;"></div>
<div class="r" style="left:104px;top:825px;width:6px;height:22px;background:#217346;"></div>
<svg class="r" style="left:117px;top:835px;" width="14" height="6" viewBox="0 0 14 6"><circle cx="2.2" cy="3" r="1.3" fill="#1f5e3a"/><circle cx="7" cy="3" r="1.3" fill="#1f5e3a"/><circle cx="11.8" cy="3" r="1.3" fill="#1f5e3a"/></svg>
<svg class="r" style="left:142px;top:827px;" width="18" height="18" viewBox="0 0 18 18"><circle cx="9" cy="9" r="7.5" fill="none" stroke="#707070" stroke-width="1.3"/><path d="M9 4.5V13.5M4.5 9H13.5" stroke="#707070" stroke-width="1.8"/></svg>
<svg class="r" style="left:178px;top:828px;" width="4" height="17" viewBox="0 0 4 17"><circle cx="2" cy="2" r="1" fill="#aaa"/><circle cx="2" cy="8.5" r="1" fill="#aaa"/><circle cx="2" cy="15" r="1" fill="#aaa"/></svg>
<div class="r" style="left:210px;top:829px;width:44px;height:15px;background:#d6d6d6;"></div>
<div class="r" style="left:196px;top:829px;width:15px;height:15px;background:#ffffff;box-shadow:inset 0 0 0 1px #c6c6c6;"></div>
<svg class="r" style="left:199px;top:832px;" width="9" height="9" viewBox="0 0 9 9"><path d="M6 1L2 4.5L6 8z" fill="#333"/></svg>
<div class="r" style="left:211px;top:829px;width:17px;height:15px;background:#ffffff;box-shadow:inset 0 0 0 1px #c6c6c6;"></div>
<div class="r" style="left:253px;top:829px;width:15px;height:15px;background:#ffffff;box-shadow:inset 0 0 0 1px #c6c6c6;"></div>
<svg class="r" style="left:256px;top:832px;" width="9" height="9" viewBox="0 0 9 9"><path d="M3 1L7 4.5L3 8z" fill="#333"/></svg>
<div class="r" style="left:290px;top:205px;width:519px;height:645px;background:#e6e6e6;"></div>
<div class="t" style="left:303.50px;top:221.45px;font-size:22.5px;line-height:22.5px;color:#2a7658;transform:scaleX(0.8958);">Справка</div>
<svg class="r" style="left:739px;top:226px;" width="10" height="6" viewBox="0 0 10 6"><path d="M0 0.5H10L5 5.5z" fill="#6d6d6d"/></svg>
<svg class="r" style="left:779px;top:222px;" width="12" height="12" viewBox="0 0 12 12"><path d="M1.5 1.5L10.5 10.5M10.5 1.5L1.5 10.5" stroke="#666" stroke-width="1.8"/></svg>
<svg class="r" style="left:305px;top:275px;" width="20" height="17" viewBox="0 0 20 17"><path d="M17.5 8.5H3M9 2.5L2.5 8.5L9 14.5" fill="none" stroke="#7d9d8a" stroke-width="1.3"/></svg>
<svg class="r" style="left:328px;top:275px;" width="18" height="18" viewBox="0 0 18 18"><path d="M1.5 9L9 2L16.5 9M3.5 7.3V16.5H7.2V11.5H10.8V16.5H14.5V7.3" fill="none" stroke="#2a6b4a" stroke-width="1.5"/></svg>
<div class="r" style="left:356px;top:266px;width:439px;height:32px;background:#ffffff;box-shadow:0 1px 1px rgba(0,0,0,0.12);"></div>
<svg class="r" style="left:362px;top:272px;" width="20" height="18" viewBox="0 0 20 18"><circle cx="11.5" cy="6.8" r="5" fill="none" stroke="#1f6b40" stroke-width="2"/><path d="M8 10.5L2.5 16" stroke="#1f6b40" stroke-width="2.2"/></svg>
<div class="t" style="left:387.10px;top:275.60px;font-size:14px;line-height:14px;color:#333;transform:scaleX(0.9810);">install-download.net</div>
<div class="r" style="left:509px;top:273px;width:1px;height:20px;background:#111;"></div>
<svg class="r" style="left:770px;top:276px;" width="13" height="12" viewBox="0 0 13 12"><path d="M1.5 1.5L11 10.5M11 1.5L1.5 10.5" stroke="#222" stroke-width="1.4"/></svg>
<div class="t" style="left:308.20px;top:329.70px;font-size:15px;line-height:15px;color:#3a3a3a;font-weight:bold;transform:scaleX(0.9971);">Резуль</div>
<div class="r" style="left:356px;top:300px;width:280px;height:78px;background:#ffffff;box-shadow:0 1px 2px rgba(0,0,0,0.12);"></div>
<div class="t" style="left:365.60px;top:308.45px;font-size:12.5px;line-height:12.5px;color:#333;transform:scaleX(0.9068);">instr</div>
<div class="t" style="left:365.60px;top:334.55px;font-size:12.5px;line-height:12.5px;color:#333;transform:scaleX(0.9280);">instring</div>
<div class="t" style="left:365.60px;top:360.75px;font-size:12.5px;line-height:12.5px;color:#333;transform:scaleX(0.9230);">функция instrrev</div>
<div class="t" style="left:308.00px;top:377.40px;font-size:15px;line-height:15px;color:#2070b0;font-weight:bold;transform:scaleX(1.0093);">Представление данных в виде пузырьковой диаграммы</div>
<div class="t" style="left:308.00px;top:403.00px;font-size:14px;line-height:14px;color:#555555;transform:scaleX(0.9898);">Для данной пузырьковой диаграммы мы использовали стиль Слабый</div>
<div class="t" style="left:308.00px;top:423.00px;font-size:14px;line-height:14px;color:#555555;transform:scaleX(0.9676);">эффект — Акцент 4 для области построения, Сильный эффект — Акцент 4</div>
<div class="t" style="left:308.00px;top:443.00px;font-size:14px;line-height:14px;color:#555555;transform:scaleX(0.9661);">для области диаграммы, Слабый эффект — Акцент 4 для названия</div>
<div class="t" style="left:308.00px;top:482.00px;font-size:15px;line-height:15px;color:#2070b0;font-weight:bold;transform:scaleX(1.0132);">Представление данных в виде точечной диаграммы или</div>
<div class="t" style="left:308.00px;top:503.60px;font-size:15px;line-height:15px;color:#2070b0;font-weight:bold;transform:scaleX(1.0056);">графика</div>
<div class="t" style="left:308.00px;top:529.40px;font-size:14px;line-height:14px;color:#555555;transform:scaleX(0.9847);">Для данной точечной диаграммы был выбрано значение Слабый эффект</div>
<div class="t" style="left:308.00px;top:549.00px;font-size:14px;line-height:14px;color:#555555;transform:scaleX(0.9892);">— Акцент 3. Щелкните в области диаграммы. На вкладке &quot;Формат&quot; в</div>
<div class="t" style="left:308.00px;top:569.00px;font-size:14px;line-height:14px;color:#555555;transform:scaleX(1.0035);">группе &quot;Стили фигур&quot; нажмите кнопку &quot;Дополнительные &quot; и выберите</div>
<div class="r" style="left:809px;top:207px;width:1px;height:641px;background:#c6c6c6;"></div>
<div class="t" style="left:823.60px;top:221.45px;font-size:22.5px;line-height:22.5px;color:#2a7658;transform:scaleX(0.8898);">Тезаурус</div>
<svg class="r" style="left:1009px;top:226px;" width="10" height="6" viewBox="0 0 10 6"><path d="M0 0.5H10L5 5.5z" fill="#6d6d6d"/></svg>
<svg class="r" style="left:1049px;top:222px;" width="12" height="12" viewBox="0 0 12 12"><path d="M1.5 1.5L10.5 10.5M10.5 1.5L1.5 10.5" stroke="#666" stroke-width="1.8"/></svg>
<svg class="r" style="left:827px;top:257px;" width="10" height="11" viewBox="0 0 10 11"><path d="M7 1.5L2.5 5.5L7 9.5" fill="none" stroke="#b0b0b0" stroke-width="2"/></svg>
<div class="r" style="left:849px;top:252px;width:216px;height:22px;background:#ffffff;box-shadow:inset 0 0 0 1px #b4b4b4;"></div>
<div class="t" style="left:856.60px;top:256.75px;font-size:12.5px;line-height:12.5px;color:#555;transform:scaleX(0.9288);">Найти синонимы...</div>
<svg class="r" style="left:1045px;top:255px;" width="18" height="16" viewBox="0 0 18 16"><circle cx="10.5" cy="6.5" r="4.5" fill="none" stroke="#1f6b40" stroke-width="2"/><path d="M7.3 9.8L2.5 14.5" stroke="#1f6b40" stroke-width="2.2"/></svg>
<div class="r" style="left:823px;top:288px;width:242px;height:366px;background:#ffffff;box-shadow:inset 0 0 0 1px #ababab;"></div>
<div class="r" style="left:823px;top:670px;width:242px;height:1px;background:#e1e1e1;"></div>
<div class="r" style="left:823px;top:814px;width:242px;height:22px;background:#fcfcfc;box-shadow:inset 0 0 0 1px #ababab;"></div>
<div class="t" style="left:829.40px;top:819.75px;font-size:12.5px;line-height:12.5px;color:#333;transform:scaleX(0.9944);">русский</div>
<svg class="r" style="left:1049px;top:822px;" width="10" height="6" viewBox="0 0 10 6"><path d="M0 0.5H10L5 5.5z" fill="#6d6d6d"/></svg>
<div class="r" style="left:1079px;top:207px;width:1px;height:641px;background:#c6c6c6;"></div>
<div class="t" style="left:1093.50px;top:221.65px;font-size:22.5px;line-height:22.5px;color:#2a7658;transform:scaleX(0.8771);">Специальные в...</div>
<svg class="r" style="left:1264px;top:226px;" width="10" height="6" viewBox="0 0 10 6"><path d="M0 0.5H10L5 5.5z" fill="#6d6d6d"/></svg>
<svg class="r" style="left:1304px;top:222px;" width="12" height="12" viewBox="0 0 12 12"><path d="M1.5 1.5L10.5 10.5M10.5 1.5L1.5 10.5" stroke="#666" stroke-width="1.8"/></svg>
<div class="t" style="left:1094.50px;top:255.55px;font-size:12.5px;line-height:12.5px;color:#333;transform:scaleX(0.9508);">Результаты проверки</div>
<div class="r" style="left:1096px;top:275px;width:223px;height:253px;background:#ffffff;"></div>
<div class="t" style="left:1107.10px;top:283.80px;font-size:13px;line-height:13px;color:#262626;font-weight:bold;transform:scaleX(0.9349);">Ошибки</div>
<div class="r" style="left:1107px;top:301px;width:212px;height:1px;background:#e6e6e6;"></div>
<svg class="r" style="left:1106px;top:319px;" width="12" height="16" viewBox="0 0 12 16"><path d="M2.5 1.5L9 8L2.5 14.5" fill="none" stroke="#444" stroke-width="1.1"/></svg>
<div class="t" style="left:1133.20px;top:312.80px;font-size:13px;line-height:13px;color:#262626;font-weight:bold;transform:scaleX(0.8987);">Отсутствует замещающий</div>
<div class="t" style="left:1133.20px;top:328.70px;font-size:13px;line-height:13px;color:#262626;font-weight:bold;transform:scaleX(0.9046);">текст (28)</div>
<div class="t" style="left:1107.40px;top:356.80px;font-size:13px;line-height:13px;color:#262626;font-weight:bold;transform:scaleX(0.9168);">Предупреждения</div>
<div class="r" style="left:1107px;top:374px;width:212px;height:1px;background:#e6e6e6;"></div>
<svg class="r" style="left:1106px;top:392px;" width="12" height="16" viewBox="0 0 12 16"><path d="M2.5 1.5L9 8L2.5 14.5" fill="none" stroke="#444" stroke-width="1.1"/></svg>
<div class="t" style="left:1133.20px;top:385.60px;font-size:13px;line-height:13px;color:#262626;font-weight:bold;transform:scaleX(0.8711);">Контрастность, затрудняющая</div>
<div class="t" style="left:1133.20px;top:401.40px;font-size:13px;line-height:13px;color:#262626;font-weight:bold;transform:scaleX(0.9055);">чтение текста (30)</div>
<div class="r" style="left:1093px;top:538px;width:13px;height:13px;background:#ffffff;box-shadow:inset 0 0 0 1px #b4b4b4;"></div>
<div class="t" style="left:1111.50px;top:539.45px;font-size:12.5px;line-height:12.5px;color:#333;transform:scaleX(0.9570);">Выполнять проверку читаемости во</div>
<div class="t" style="left:1111.50px;top:555.45px;font-size:12.5px;line-height:12.5px;color:#333;transform:scaleX(0.9346);">время работы</div>
<div class="t" style="left:1093.00px;top:577.20px;font-size:13px;line-height:13px;color:#444;font-weight:bold;transform:scaleX(0.9024);">Дополнительные сведения</div>
<svg class="r" style="left:1305px;top:579px;" width="11" height="8" viewBox="0 0 11 8"><path d="M1.5 1.5L5.5 5.5L9.5 1.5" fill="none" stroke="#666" stroke-width="1.6"/></svg>
<div class="t" style="left:1102.30px;top:605.95px;font-size:12.5px;line-height:12.5px;color:#1e6b41;transform:scaleX(0.9461);text-decoration:underline;">Дополнительные сведения о создании</div>
<div class="t" style="left:1102.30px;top:622.05px;font-size:12.5px;line-height:12.5px;color:#1e6b41;transform:scaleX(0.9490);text-decoration:underline;">документов, доступных людям с</div>
<div class="t" style="left:1102.30px;top:637.75px;font-size:12.5px;line-height:12.5px;color:#1e6b41;transform:scaleX(0.9871);text-decoration:underline;">ограниченными возможностями</div>
<div class="r" style="left:1334px;top:207px;width:1px;height:641px;background:#c6c6c6;"></div>
<div class="t" style="left:1349.20px;top:221.35px;font-size:22.5px;line-height:22.5px;color:#2a7658;transform:scaleX(0.8624);">Выделение</div>
<svg class="r" style="left:1514px;top:226px;" width="10" height="6" viewBox="0 0 10 6"><path d="M0 0.5H10L5 5.5z" fill="#6d6d6d"/></svg>
<svg class="r" style="left:1554px;top:222px;" width="12" height="12" viewBox="0 0 12 12"><path d="M1.5 1.5L10.5 10.5M10.5 1.5L1.5 10.5" stroke="#666" stroke-width="1.8"/></svg>
<div class="r" style="left:1348px;top:252px;width:89px;height:24px;background:#ffffff;box-shadow:inset 0 0 0 1px #b4b4b4;"></div>
<div class="t" style="left:1357.60px;top:257.75px;font-size:12.5px;line-height:12.5px;color:#333;transform:scaleX(0.9227);">Показать все</div>
<div class="r" style="left:1440px;top:252px;width:80px;height:24px;background:#ffffff;box-shadow:inset 0 0 0 1px #b4b4b4;"></div>
<div class="t" style="left:1449.40px;top:257.75px;font-size:12.5px;line-height:12.5px;color:#333;transform:scaleX(0.9385);">Скрыть все</div>
<div class="r" style="left:1533px;top:257px;width:17px;height:14px;background:#ffffff;box-shadow:inset 0 0 0 1px #b4b4b4;"></div>
<svg class="r" style="left:1535px;top:259px;" width="13" height="10" viewBox="0 0 13 10"><path d="M1.5 8H11.5L6.5 3z" fill="#666"/></svg>
<div class="r" style="left:1553px;top:257px;width:17px;height:14px;background:#ffffff;box-shadow:inset 0 0 0 1px #b4b4b4;"></div>
<svg class="r" style="left:1555px;top:259px;" width="13" height="10" viewBox="0 0 13 10"><path d="M1.5 2.5H11.5L6.5 7.5z" fill="#666"/></svg>
<div class="r" style="left:1365px;top:290px;width:204px;height:19px;background:#a0d6b8;"></div>
<div class="t" style="left:1368.10px;top:294.15px;font-size:12.5px;line-height:12.5px;color:#333;transform:scaleX(0.9478);">Диаграмма 16</div>
<svg class="r" style="left:1526px;top:294px;" width="18" height="12" viewBox="0 0 18 12"><path d="M1.8 7.2A7.5 6.3 0 0 1 16.8 7.2" fill="none" stroke="#333" stroke-width="1.3"/><circle cx="9.3" cy="7.3" r="2.3" fill="none" stroke="#333" stroke-width="1.3"/></svg>
<div class="t" style="left:1368.10px;top:313.15px;font-size:12.5px;line-height:12.5px;color:#333;transform:scaleX(0.9434);">группа_НавигацияВынос...</div>
<svg class="r" style="left:1353px;top:313px;" width="8" height="8" viewBox="0 0 8 8"><path d="M7 1V7H1z" fill="#333"/></svg>
<svg class="r" style="left:1526px;top:313px;" width="18" height="12" viewBox="0 0 18 12"><path d="M1.8 7.2A7.5 6.3 0 0 1 16.8 7.2" fill="none" stroke="#333" stroke-width="1.3"/><circle cx="9.3" cy="7.3" r="2.3" fill="none" stroke="#333" stroke-width="1.3"/></svg>
<div class="t" style="left:1384.30px;top:332.15px;font-size:12.5px;line-height:12.5px;color:#333;transform:scaleX(0.9291);">фигура_ПрямаяСтрел...</div>
<svg class="r" style="left:1526px;top:332px;" width="18" height="12" viewBox="0 0 18 12"><path d="M1.8 7.2A7.5 6.3 0 0 1 16.8 7.2" fill="none" stroke="#333" stroke-width="1.3"/><circle cx="9.3" cy="7.3" r="2.3" fill="none" stroke="#333" stroke-width="1.3"/></svg>
<div class="t" style="left:1384.30px;top:351.15px;font-size:12.5px;line-height:12.5px;color:#333;transform:scaleX(0.9238);">текст_НавигацияВыно...</div>
<svg class="r" style="left:1526px;top:351px;" width="18" height="12" viewBox="0 0 18 12"><path d="M1.8 7.2A7.5 6.3 0 0 1 16.8 7.2" fill="none" stroke="#333" stroke-width="1.3"/><circle cx="9.3" cy="7.3" r="2.3" fill="none" stroke="#333" stroke-width="1.3"/></svg>
<div class="t" style="left:1368.10px;top:370.15px;font-size:12.5px;line-height:12.5px;color:#333;transform:scaleX(0.9434);">группа_НавигацияВынос...</div>
<svg class="r" style="left:1353px;top:370px;" width="8" height="8" viewBox="0 0 8 8"><path d="M7 1V7H1z" fill="#333"/></svg>
<svg class="r" style="left:1526px;top:370px;" width="18" height="12" viewBox="0 0 18 12"><path d="M1.8 7.2A7.5 6.3 0 0 1 16.8 7.2" fill="none" stroke="#333" stroke-width="1.3"/><circle cx="9.3" cy="7.3" r="2.3" fill="none" stroke="#333" stroke-width="1.3"/></svg>
<div class="t" style="left:1384.30px;top:389.15px;font-size:12.5px;line-height:12.5px;color:#333;transform:scaleX(0.9291);">фигура_ПрямаяСтрел...</div>
<svg class="r" style="left:1526px;top:389px;" width="18" height="12" viewBox="0 0 18 12"><path d="M1.8 7.2A7.5 6.3 0 0 1 16.8 7.2" fill="none" stroke="#333" stroke-width="1.3"/><circle cx="9.3" cy="7.3" r="2.3" fill="none" stroke="#333" stroke-width="1.3"/></svg>
<div class="t" style="left:1384.30px;top:408.15px;font-size:12.5px;line-height:12.5px;color:#333;transform:scaleX(0.9238);">текст_НавигацияВыно...</div>
<svg class="r" style="left:1526px;top:408px;" width="18" height="12" viewBox="0 0 18 12"><path d="M1.8 7.2A7.5 6.3 0 0 1 16.8 7.2" fill="none" stroke="#333" stroke-width="1.3"/><circle cx="9.3" cy="7.3" r="2.3" fill="none" stroke="#333" stroke-width="1.3"/></svg>
<div class="t" style="left:1368.10px;top:427.15px;font-size:12.5px;line-height:12.5px;color:#333;transform:scaleX(0.9454);">Диаграмма 10</div>
<svg class="r" style="left:1526px;top:427px;" width="18" height="12" viewBox="0 0 18 12"><path d="M1.8 7.2A7.5 6.3 0 0 1 16.8 7.2" fill="none" stroke="#333" stroke-width="1.3"/><circle cx="9.3" cy="7.3" r="2.3" fill="none" stroke="#333" stroke-width="1.3"/></svg>
<div class="t" style="left:1368.10px;top:446.15px;font-size:12.5px;line-height:12.5px;color:#333;transform:scaleX(0.9448);">группа_Навигация</div>
<svg class="r" style="left:1353px;top:446px;" width="8" height="8" viewBox="0 0 8 8"><path d="M7 1V7H1z" fill="#333"/></svg>
<svg class="r" style="left:1526px;top:446px;" width="18" height="12" viewBox="0 0 18 12"><path d="M1.8 7.2A7.5 6.3 0 0 1 16.8 7.2" fill="none" stroke="#333" stroke-width="1.3"/><circle cx="9.3" cy="7.3" r="2.3" fill="none" stroke="#333" stroke-width="1.3"/></svg>
<div class="t" style="left:1384.30px;top:465.15px;font-size:12.5px;line-height:12.5px;color:#333;transform:scaleX(0.9530);">Группа 4</div>
<svg class="r" style="left:1369px;top:465px;" width="8" height="8" viewBox="0 0 8 8"><path d="M7 1V7H1z" fill="#333"/></svg>
<svg class="r" style="left:1526px;top:465px;" width="18" height="12" viewBox="0 0 18 12"><path d="M1.8 7.2A7.5 6.3 0 0 1 16.8 7.2" fill="none" stroke="#333" stroke-width="1.3"/><circle cx="9.3" cy="7.3" r="2.3" fill="none" stroke="#333" stroke-width="1.3"/></svg>
<div class="t" style="left:1400.50px;top:484.15px;font-size:12.5px;line-height:12.5px;color:#333;transform:scaleX(0.9225);">текст_НавигацияНа...</div>
<svg class="r" style="left:1526px;top:484px;" width="18" height="12" viewBox="0 0 18 12"><path d="M1.8 7.2A7.5 6.3 0 0 1 16.8 7.2" fill="none" stroke="#333" stroke-width="1.3"/><circle cx="9.3" cy="7.3" r="2.3" fill="none" stroke="#333" stroke-width="1.3"/></svg>
<div class="t" style="left:1400.50px;top:503.15px;font-size:12.5px;line-height:12.5px;color:#333;transform:scaleX(0.9186);">текст_НавигацияДа...</div>
<svg class="r" style="left:1526px;top:503px;" width="18" height="12" viewBox="0 0 18 12"><path d="M1.8 7.2A7.5 6.3 0 0 1 16.8 7.2" fill="none" stroke="#333" stroke-width="1.3"/><circle cx="9.3" cy="7.3" r="2.3" fill="none" stroke="#333" stroke-width="1.3"/></svg>
<div class="t" style="left:1384.30px;top:522.15px;font-size:12.5px;line-height:12.5px;color:#333;transform:scaleX(0.9409);">текст_НавигацияНиж...</div>
<svg class="r" style="left:1526px;top:522px;" width="18" height="12" viewBox="0 0 18 12"><path d="M1.8 7.2A7.5 6.3 0 0 1 16.8 7.2" fill="none" stroke="#333" stroke-width="1.3"/><circle cx="9.3" cy="7.3" r="2.3" fill="none" stroke="#333" stroke-width="1.3"/></svg>
<div class="t" style="left:1384.30px;top:541.15px;font-size:12.5px;line-height:12.5px;color:#333;transform:scaleX(0.9135);">текст_НавигацияВерх...</div>
<svg class="r" style="left:1526px;top:541px;" width="18" height="12" viewBox="0 0 18 12"><path d="M1.8 7.2A7.5 6.3 0 0 1 16.8 7.2" fill="none" stroke="#333" stroke-width="1.3"/><circle cx="9.3" cy="7.3" r="2.3" fill="none" stroke="#333" stroke-width="1.3"/></svg>
<div class="r" style="left:1px;top:850px;width:1582px;height:21px;background:#f3f3f3;"></div>
<div class="r" style="left:1px;top:850px;width:1582px;height:1px;background:#d4d4d4;"></div>
<div class="t" style="left:9.50px;top:854.90px;font-size:12px;line-height:12px;color:#333;transform:scaleX(0.9690);">Готово</div>
<svg class="r" style="left:1282px;top:853px;" width="15" height="14" viewBox="0 0 15 14"><path d="M1.5 1.5H13.5V13.5H1.5ZM5.5 1.5V13.5M9.5 1.5V13.5M1.5 5.5H13.5M1.5 9.5H13.5" fill="none" stroke="#666" stroke-width="1.1"/></svg>
<div class="r" style="left:1310px;top:851px;width:40px;height:20px;background:#c5c5c5;"></div>
<svg class="r" style="left:1322px;top:853px;" width="16" height="14" viewBox="0 0 16 14"><rect x="1.5" y="1.5" width="13" height="12" fill="none" stroke="#555" stroke-width="1.1"/><rect x="4.5" y="3.5" width="7" height="8" fill="none" stroke="#555"/><path d="M6 5.5H10M6 7.5H10M6 9.5H10" stroke="#555"/></svg>
<svg class="r" style="left:1362px;top:853px;" width="16" height="14" viewBox="0 0 16 14"><rect x="1.5" y="1.5" width="13" height="12" fill="none" stroke="#666" stroke-width="1.1"/><path d="M5.5 1.5V8.5H9.5V1.5M9.5 5H14" fill="none" stroke="#666" stroke-width="1.1"/></svg>
<div class="r" style="left:1396px;top:860px;width:8px;height:1px;background:#444;"></div>
<div class="r" style="left:1409px;top:860px;width:100px;height:1px;background:#b0b0b0;"></div>
<div class="r" style="left:1457px;top:856px;width:5px;height:11px;background:#6f6f6f;"></div>
<svg class="r" style="left:1513px;top:854px;" width="10" height="10" viewBox="0 0 10 10"><path d="M5 0.5V9.5M0.5 5H9.5" stroke="#444" stroke-width="1.1"/></svg>
<div class="t" style="left:1536.00px;top:855.00px;font-size:12px;line-height:12px;color:#333;transform:scaleX(0.8399);">100 %</div>
<div class="r" style="left:0px;top:66px;width:1px;height:807px;background:#217346;"></div>
<div class="r" style="left:1583px;top:66px;width:2px;height:807px;background:#217346;"></div>
<div class="r" style="left:0px;top:871px;width:1585px;height:2px;background:#217346;"></div>
</body></html>
